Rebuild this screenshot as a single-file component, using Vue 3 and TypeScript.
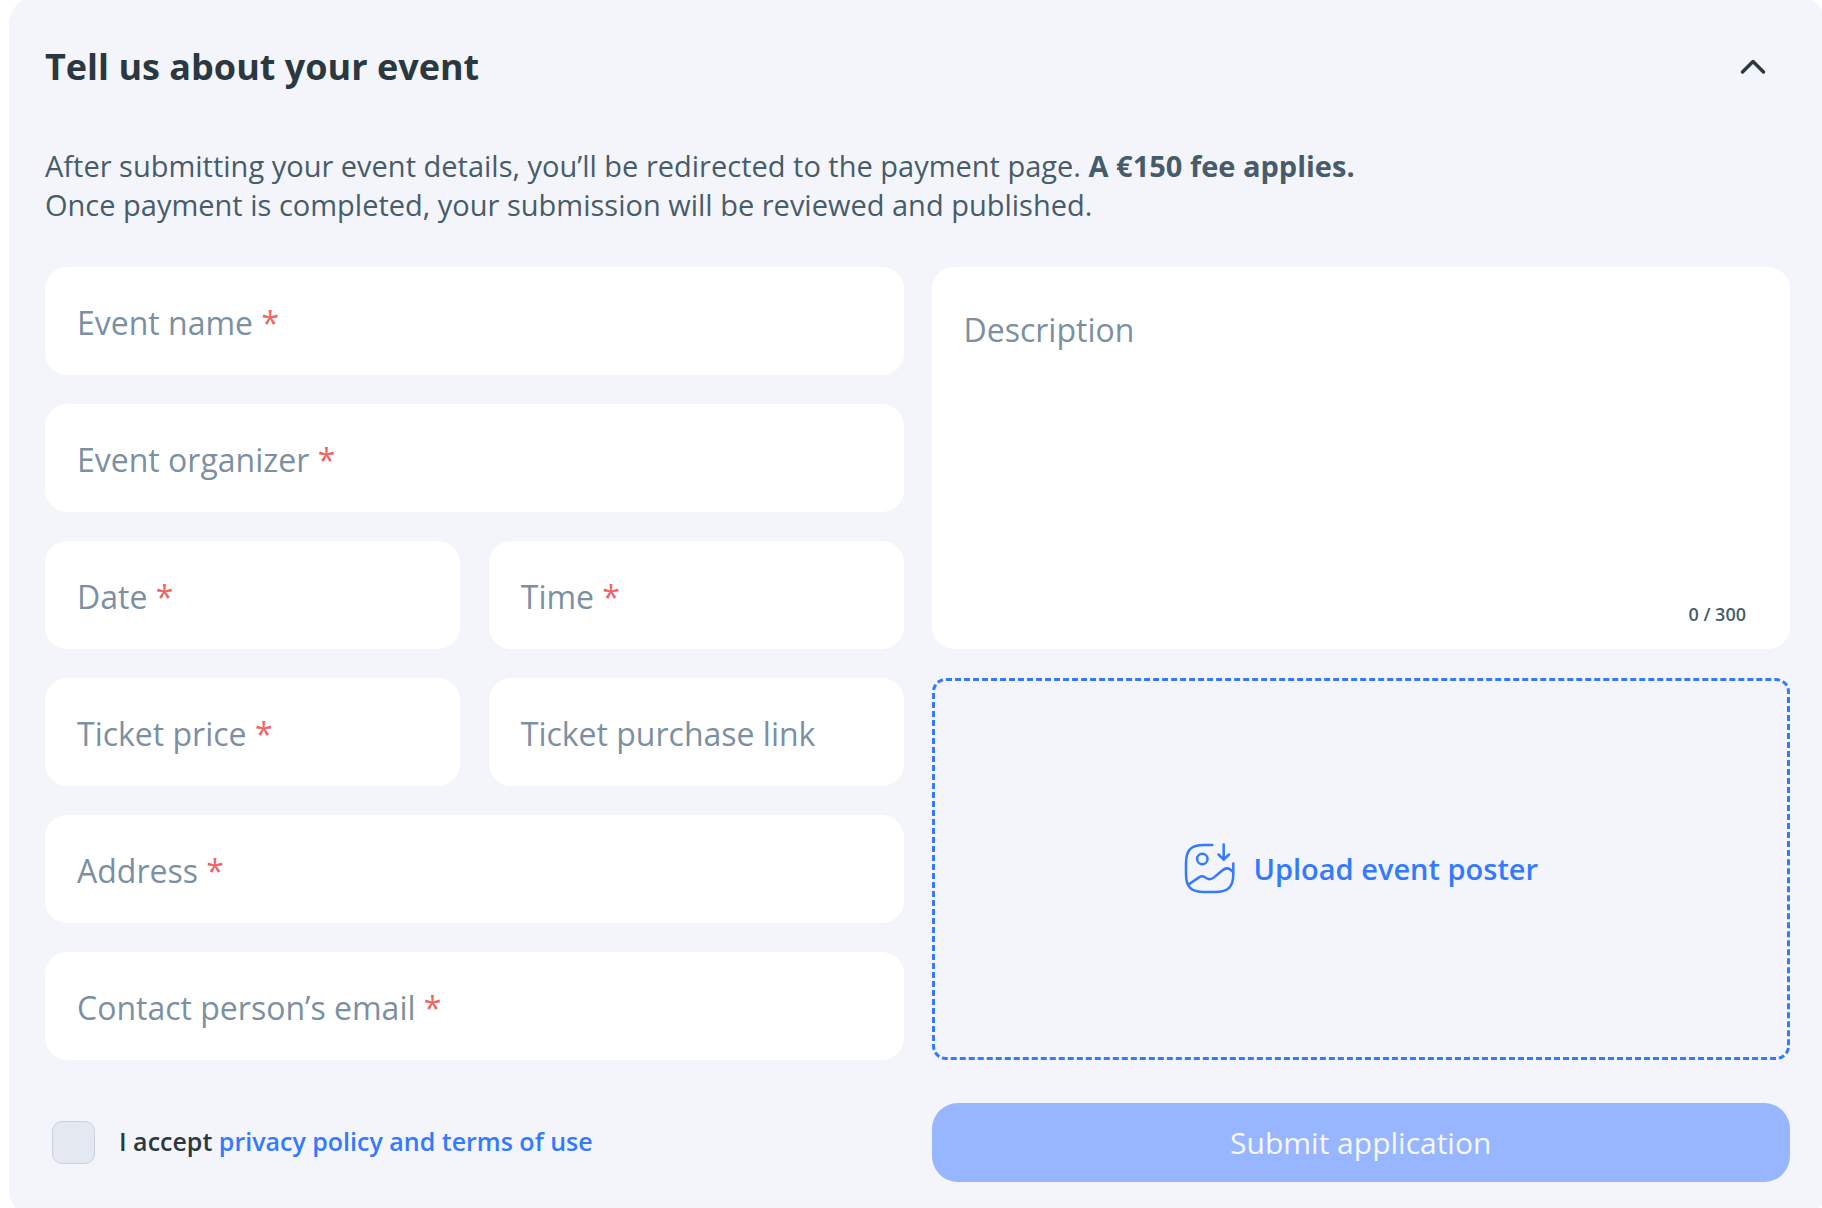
<script setup lang="ts">
import { ref } from 'vue'

interface Field {
  id: string
  label: string
  type: string
  required: boolean
  half?: boolean
}

const fields: Field[] = [
  { id: 'event-name', label: 'Event name', type: 'text', required: true },
  { id: 'event-organizer', label: 'Event organizer', type: 'text', required: true },
  { id: 'event-date', label: 'Date', type: 'text', required: true, half: true },
  { id: 'event-time', label: 'Time', type: 'text', required: true, half: true },
  { id: 'ticket-price', label: 'Ticket price', type: 'text', required: true, half: true },
  { id: 'ticket-link', label: 'Ticket purchase link', type: 'text', required: false, half: true },
  { id: 'address', label: 'Address', type: 'text', required: true },
  { id: 'email', label: 'Contact person’s email', type: 'email', required: true },
]

const maxLength = 300
const values = ref<Record<string, string>>({})
const description = ref('')
const accepted = ref(false)
const open = ref(true)
</script>

<template>
  <main class="card">
    <header class="head">
      <h1>Tell us about your event</h1>
      <button
        type="button"
        class="toggle"
        :class="{ closed: !open }"
        aria-label="Toggle section"
        :aria-expanded="open"
        @click="open = !open"
      >
        <svg width="32" height="32" viewBox="0 0 32 32" fill="none" aria-hidden="true">
          <path d="M5.5 21L16 10.5L26.5 21" stroke="currentColor" stroke-width="3.5" stroke-linecap="round" stroke-linejoin="round" />
        </svg>
      </button>
    </header>

    <form v-show="open" @submit.prevent>
      <p class="intro">
        After submitting your event details, you’ll be redirected to the payment page.
        <strong>A €150 fee applies.</strong><br />
        Once payment is completed, your submission will be reviewed and published.
      </p>

      <div class="columns">
        <div class="fields">
          <div v-for="f in fields" :key="f.id" class="field" :class="{ half: f.half }">
            <input :id="f.id" v-model="values[f.id]" :type="f.type" :required="f.required" />
            <label v-show="!values[f.id]" :for="f.id">{{ f.label }} <span v-if="f.required" class="star">*</span></label>
          </div>
        </div>

        <div class="side">
          <div class="field area">
            <textarea id="description" v-model="description" :maxlength="maxLength"></textarea>
            <label v-show="!description" for="description">Description</label>
            <span class="counter">{{ description.length }} / {{ maxLength }}</span>
          </div>
          <button type="button" class="upload">
            <svg width="53" height="53" viewBox="0 0 53 53" fill="none" stroke="currentColor" stroke-width="2.5" stroke-linecap="round" stroke-linejoin="round" aria-hidden="true">
              <path d="M29.3 2H21C8 2 3 7 3 20V31C3 44 8 49 21 49H32.3C45 49 50.3 44 50.3 31V20.5" />
              <circle cx="19.3" cy="16" r="5.2" />
              <path d="M40.7 1.5V16.7M35.5 11.5L40.7 16.7L46 11.5" />
              <path d="M5.5 41.5L16 34.4C18 33 20 33 22 34.3L23.5 35.3C26 36.8 28.5 36.5 31 34.4L39.5 27.2C42.5 24.8 45.5 24.8 48.2 27.2L49.8 28.6" />
            </svg>
            <span>Upload event poster</span>
          </button>
        </div>
      </div>

      <div class="footer">
        <div class="accept">
          <input id="accept" v-model="accepted" type="checkbox" />
          <label for="accept">I accept <a href="#terms">privacy policy and terms of use</a></label>
        </div>
        <button type="submit" class="submit" :disabled="!accepted">Submit application</button>
      </div>
    </form>
  </main>
</template>

<style>
body {
  background: #fff;
  overflow: hidden;
}
</style>

<style scoped>
.card,
.card * {
  box-sizing: border-box;
}

.card {
  margin: -4px -4px 0 9px;
  padding: 36px;
  border-radius: 28px;
  background: #f4f5fb;
  color: #475c6b;
  font-family: "Open Sans", "Noto Sans", sans-serif;
}

button,
input,
textarea {
  margin: 0;
  border: 0;
  font: inherit;
  color: inherit;
  outline: none;
}

button {
  cursor: pointer;
}

.head {
  display: flex;
  align-items: center;
  justify-content: space-between;
  height: 70px;
}

h1 {
  margin: 0;
  font-size: 36px;
  line-height: 48px;
  font-weight: 700;
  color: #2b3840;
}

.toggle {
  display: flex;
  margin-right: 21px;
  padding: 0;
  background: none;
  color: #2b3840;
}

.toggle.closed svg {
  transform: rotate(180deg);
}

.intro {
  margin: 44px 0 43px;
  font-size: 29px;
  line-height: 39px;
}

.columns,
.footer {
  display: grid;
  grid-template-columns: 1fr 1fr;
  column-gap: 28px;
}

.fields {
  display: grid;
  grid-template-columns: 1fr 1fr;
  gap: 29px;
}

.side {
  display: grid;
  grid-template-rows: 1fr 1fr;
  gap: 29px;
}

.field {
  position: relative;
  grid-column: span 2;
  height: 108px;
  border-radius: 22px;
  background: #fff;
  overflow: hidden;
}

.field.half {
  grid-column: span 1;
}

.field input,
.field textarea {
  display: block;
  width: 100%;
  height: 100%;
  padding: 4px 32px 0;
  background: transparent;
  font-size: 32px;
  line-height: 44px;
  resize: none;
}

.field label {
  position: absolute;
  top: 34px;
  left: 32px;
  font-size: 32px;
  line-height: 44px;
  color: #7b90a2;
  white-space: nowrap;
  pointer-events: none;
}

.field.area {
  grid-column: auto;
  height: auto;
}

.field.area textarea {
  padding-top: 41px;
}

.field.area label {
  top: 41px;
}

.star {
  color: #f06464;
}

.counter {
  position: absolute;
  right: 44px;
  bottom: 23px;
  font-size: 18px;
  line-height: 24px;
  font-weight: 600;
}

.upload {
  display: flex;
  align-items: center;
  justify-content: center;
  gap: 17px;
  width: 100%;
  border: 3px dashed #347aff;
  border-radius: 14px;
  background: none;
  color: #347aff;
  font-size: 29px;
  line-height: 40px;
  font-weight: 600;
}

.footer {
  margin-top: 43px;
  align-items: center;
}

.accept {
  display: flex;
  align-items: center;
  gap: 24px;
  padding-left: 7px;
  font-size: 25px;
  line-height: 36px;
  font-weight: 600;
  color: #2b3840;
}

.accept label {
  padding-bottom: 3px;
}

.accept input {
  appearance: none;
  width: 43px;
  height: 43px;
  border: 1px solid #c6d0de;
  border-radius: 10px;
  background: #e4e9f1;
}

.accept input:checked {
  background: #347aff;
}

.accept a {
  color: #347aff;
  text-decoration: none;
}

.submit {
  height: 79px;
  border-radius: 26px;
  background: #97b6ff;
  color: #f6f8fd;
  font-size: 30px;
  font-weight: 400;
}
</style>
